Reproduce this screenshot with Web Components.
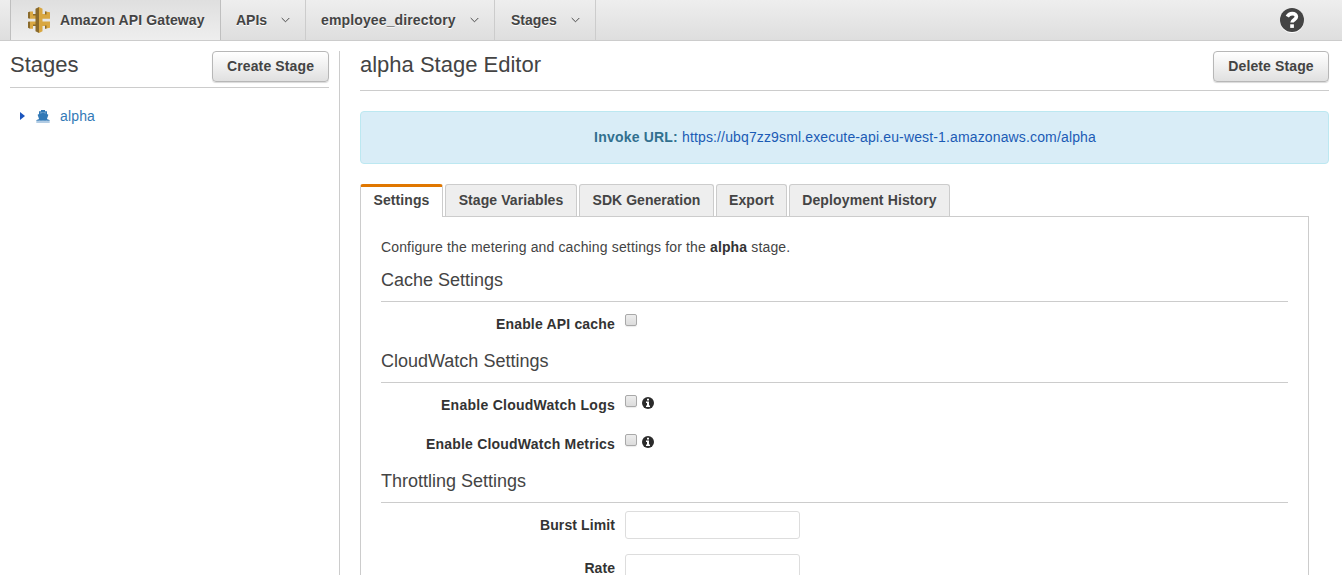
<!DOCTYPE html>
<html lang="en">
<head>
<meta charset="utf-8">
<title>Amazon API Gateway</title>
<style>
  html, body { margin: 0; height: 100%; overflow: hidden; background: #fff; }
  body { font: 14px/20px "Liberation Sans", Arial, sans-serif; color: #333; }
</style>
</head>
<body>
<gateway-app></gateway-app>

<script>
const define = (name, html) => {
  const template = document.createElement('template');
  template.innerHTML = html;
  customElements.define(name, class extends HTMLElement {
    constructor() {
      super();
      this.attachShadow({ mode: 'open' }).append(template.content.cloneNode(true));
    }
  });
};

/* ---------- icons ---------- */
define('gateway-logo', `
  <style>:host{display:block;width:24px;height:28px} svg{display:block}</style>
  <svg width="24" height="28" viewBox="0 0 24 28">
    <path fill="#d9a741" d="M3 5.500H6V8H9V12.700H3zM3 15.500H9V20H6V22.700H3zM15 8h3V5.500l5 .8v6.400h-8zM15 15.500h8v6.200l-5 1V20h-3z"/>
    <path fill="#8a6a2b" d="M1 6.300 3 5.500V12.700L1 12.200zM1 15.800 3 15.500V22.700L1 21.700zM18 5.500h1.500V8.500H18zM18 19.500h1.500v2.900l-1.500.3zM6 8h3v1.500H6zM6 18.500h3V20H6z"/>
    <path fill="#8a6a2b" d="M8.500 2.800 12 1V27L8.500 25.300z"/>
    <path fill="#d9a741" d="M12 1 15.500 2.800V25.300L12 27z"/>
  </svg>`);
define('chevron-icon', `
  <style>:host{display:block;width:9px;height:6px} svg{display:block}</style>
  <svg width="9" height="6" viewBox="0 0 9 6"><path d="M.7 1 4.500 4.800 8.300 1" fill="none" stroke="#4a4a4a" stroke-width="1"/></svg>`);
define('help-icon', `
  <style>:host{display:block;width:24px;height:25px} svg{display:block}</style>
  <svg width="24" height="25" viewBox="0 0 24 25">
    <circle cx="12" cy="13" r="12" fill="#fff"/><circle cx="12" cy="12" r="12" fill="#444"/>
    <path d="M7.300 8.700C8.500 6.500 10 5.600 12.200 5.600c2.500 0 4.200 1.400 4.200 3.200 0 2.900-4.400 2.800-4.400 5.800" fill="none" stroke="#fff" stroke-width="3.600"/>
    <path d="M10.200 16.300h3.700v3.600h-3.700z" fill="#fff"/>
  </svg>`);
define('info-icon', `
  <style>:host{display:block;width:12px;height:12px} svg{display:block}</style>
  <svg width="12" height="12" viewBox="0 0 12 12"><circle cx="6" cy="6" r="6" fill="#2b2b2b"/>
    <path d="M5 1.800h2v1.700H5zM4 4.500h3V8.500h1V10H4V8.500h1V6H4z" fill="#fff"/></svg>`);
define('ship-icon', `
  <style>:host{display:block;width:14px;height:13px} svg{display:block}</style>
  <svg width="14" height="13" viewBox="0 0 14 13" fill="#337ab7">
    <path d="M5 0h4v1.300h2V4l1.400.8L11 8.800 12 10H2L3 8.800 1.600 4.800 3 4V1.300h2z"/>
    <path d="M4.300 2.500h5.400v1L7 2.800 4.300 3.500z" fill="#9cc0df"/>
    <path d="M.3 10.200 2 9.300l1.700.9 1.700-.9L7 10.200l1.700-.9 1.600.9 1.700-.9 1.700.9v.8H.3zM.3 11.600h13.400v1H.3z" opacity=".75"/>
  </svg>`);

/* ---------- header ---------- */
define('nav-item', `
  <style>
    :host{box-sizing:border-box;display:flex;align-items:center;justify-content:space-between;
      height:40px;padding:0 15px;border-right:1px solid #ccc;font-weight:700;color:#444;text-shadow:0 1px 0 #fff}
    :host([brand]){justify-content:flex-start;gap:9px;padding-left:16px;border-left:1px solid #bfbfbf;border-right-color:#bfbfbf;
      background:linear-gradient(#dfdfdf,#eee)}
    span{white-space:nowrap}
  </style>
  <slot name="icon"></slot><span><slot></slot></span><slot name="end"></slot>`);
define('top-bar', `
  <style>
    :host{box-sizing:border-box;display:flex;height:41px;padding-left:10px;border-bottom:1px solid #ccc;
      background:linear-gradient(#eee,#dedede)}
    .help{margin:8px 38px 0 auto}
  </style>
  <nav-item brand style="width:211px;letter-spacing:.11px"><gateway-logo slot="icon"></gateway-logo>Amazon API Gateway</nav-item>
  <nav-item style="width:85px">APIs<chevron-icon slot="end"></chevron-icon></nav-item>
  <nav-item style="width:189px;letter-spacing:.13px">employee_directory<chevron-icon slot="end"></chevron-icon></nav-item>
  <nav-item style="width:101px;padding-left:16px">Stages<chevron-icon slot="end"></chevron-icon></nav-item>
  <help-icon class="help"></help-icon>`);

/* ---------- controls ---------- */
define('push-button', `
  <style>
    :host{display:block}
    button{box-sizing:border-box;display:block;height:31px;padding:0 14px 1px;border:1px solid #b7b7b7;border-radius:4px;
      background:linear-gradient(#fff,#e0e0e0);box-shadow:0 1px 1px rgba(0,0,0,.15);
      font:700 14px/28px "Liberation Sans",Arial,sans-serif;letter-spacing:.12px;color:#444;white-space:nowrap;width:100%}
  </style>
  <button><slot></slot></button>`);
define('page-title', `
  <style>
    :host{box-sizing:border-box;display:flex;justify-content:space-between;align-items:flex-start;border-bottom:1px solid #ccc}
    h1{margin:0;font-size:22px;line-height:27px;font-weight:400;color:#444}
  </style>
  <h1><slot></slot></h1><slot name="action"></slot>`);
define('check-box', `
  <style>:host{box-sizing:border-box;display:block;width:12px;height:12px;border:1px solid #a9a9a9;border-radius:2px;
    background:linear-gradient(#ededed,#dcdcdc);box-shadow:0 1px 1px rgba(0,0,0,.08)}</style>`);
define('text-field', `
  <style>input{box-sizing:border-box;display:block;width:175px;height:28px;margin:0;border:1px solid #ddd;border-radius:3px;background:#fff}
  :host{display:block}</style><input type="text">`);
define('form-row', `
  <style>
    :host{display:flex;gap:10px;margin-bottom:15px;height:24px}
    :host([field]){height:28px}
    label{width:234px;padding-top:4px;text-align:right;font-weight:700;color:#333;white-space:nowrap}
    .control{display:flex;gap:5px}
    ::slotted(check-box){margin-top:4px}
    ::slotted(info-icon){margin-top:6px}
  </style>
  <label><slot name="label"></slot></label><div class="control"><slot></slot></div>`);
define('form-section', `
  <style>
    :host{display:block;padding-bottom:2px}
    h2{margin:0 0 8px;padding-bottom:11px;border-bottom:1px solid #ccc;font-size:18px;line-height:20px;font-weight:400;color:#444}
  </style>
  <h2><slot name="title"></slot></h2><slot></slot>`);

/* ---------- sidebar ---------- */
define('stage-node', `
  <style>
    :host{display:flex;align-items:center;height:20px;padding-left:10px;color:#337ab7;letter-spacing:.15px}
    .arrow{width:0;height:0;border:4px solid transparent;border-left:5px solid #1b55bd;border-right:0;margin-right:11px}
    ship-icon{margin-right:10px}
  </style>
  <span class="arrow"></span><ship-icon></ship-icon><span><slot></slot></span>`);
define('stage-sidebar', `
  <style>
    :host{box-sizing:border-box;width:340px;padding-left:10px;padding-right:10px;border-right:1px solid #ccc;display:block}
    page-title{height:37px}
    stage-node{margin-top:18px}
  </style>
  <page-title>Stages<push-button slot="action" style="width:117px">Create Stage</push-button></page-title>
  <stage-node>alpha</stage-node>`);

/* ---------- editor ---------- */
define('url-banner', `
  <style>
    :host{box-sizing:border-box;display:flex;justify-content:center;gap:4px;height:53px;padding:15px 0 0 1px;border:1px solid #bce8f1;border-radius:4px;
      background:#d9edf7;color:#31708f}
    b{letter-spacing:.2px} a{color:#1b5bb5;text-decoration:none;letter-spacing:.142px}
  </style>
  <b>Invoke URL:</b><a><slot></slot></a>`);
define('tab-item', `
  <style>
    :host{box-sizing:border-box;display:block;height:32px;padding-top:5px;border:1px solid #ccc;border-bottom:0;border-radius:3px 3px 0 0;
      background:#eee;font-weight:700;text-align:center;color:#444;white-space:nowrap;letter-spacing:.08px}
    :host([active]){height:33px;padding-top:3px;border-top:3px solid #e07700;background:#fff}
  </style><slot></slot>`);
define('tab-strip', `
  <style>:host{display:flex;gap:2px;height:32px;position:relative}</style><slot></slot>`);
define('tab-panel', `
  <style>:host{box-sizing:border-box;display:block;width:949px;height:400px;padding:20px;border:1px solid #ccc}</style><slot></slot>`);
define('stage-editor', `
  <style>
    :host{display:block;width:969px}
    page-title{height:40px}
    url-banner{margin:20px 0}
    p{margin:0 0 13px;color:#444;letter-spacing:.145px} p b{color:#333}
  </style>
  <page-title>alpha Stage Editor<push-button slot="action" style="width:116px">Delete Stage</push-button></page-title>
  <url-banner>https://ubq7zz9sml.execute-api.eu-west-1.amazonaws.com/alpha</url-banner>
  <tab-strip>
    <tab-item active style="width:83px">Settings</tab-item>
    <tab-item style="width:132px">Stage Variables</tab-item>
    <tab-item style="width:135px;letter-spacing:.03px">SDK Generation</tab-item>
    <tab-item style="width:71px">Export</tab-item>
    <tab-item style="width:161px;letter-spacing:.13px">Deployment History</tab-item>
  </tab-strip>
  <tab-panel>
    <p>Configure the metering and caching settings for the <b>alpha</b> stage.</p>
    <form-section><span slot="title">Cache Settings</span>
      <form-row><span slot="label" style="letter-spacing:.18px">Enable API cache</span><check-box></check-box></form-row>
    </form-section>
    <form-section><span slot="title">CloudWatch Settings</span>
      <form-row><span slot="label" style="letter-spacing:.26px">Enable CloudWatch Logs</span><check-box></check-box><info-icon></info-icon></form-row>
      <form-row><span slot="label" style="letter-spacing:.21px">Enable CloudWatch Metrics</span><check-box></check-box><info-icon></info-icon></form-row>
    </form-section>
    <form-section><span slot="title">Throttling Settings</span>
      <form-row field><span slot="label" style="letter-spacing:.1px">Burst Limit</span><text-field></text-field></form-row>
      <form-row field><span slot="label" style="letter-spacing:.05px">Rate</span><text-field></text-field></form-row>
    </form-section>
  </tab-panel>`);

define('gateway-app', `
  <style>
    :host{display:flex;flex-direction:column;height:575px;overflow:hidden}
    main{display:flex;gap:20px;flex:1;min-height:0;padding-top:10px}
  </style>
  <top-bar></top-bar>
  <main><stage-sidebar></stage-sidebar><stage-editor></stage-editor></main>`);
</script>
</body>
</html>
